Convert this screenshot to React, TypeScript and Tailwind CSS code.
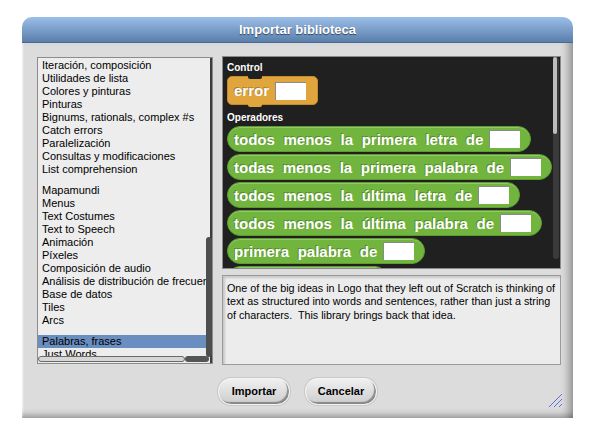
const groups = [
  [
    'Iteración, composición',
    'Utilidades de lista',
    'Colores y pinturas',
    'Pinturas',
    'Bignums, rationals, complex #s',
    'Catch errors',
    'Paralelización',
    'Consultas y modificaciones',
    'List comprehension',
  ],
  [
    'Mapamundi',
    'Menus',
    'Text Costumes',
    'Text to Speech',
    'Animación',
    'Píxeles',
    'Composición de audio',
    'Análisis de distribución de frecuencia',
    'Base de datos',
    'Tiles',
    'Arcs',
  ],
  ['Palabras, frases', 'Just Words', 'History / Multiline text'],
]

const reporters = [
  'todos menos la primera letra de',
  'todas menos la primera palabra de',
  'todos menos la última letra de',
  'todos menos la última palabra de',
  'primera palabra de',
]

const description = [
  'One of the big ideas in Logo that they left out of Scratch is thinking of',
  'text as structured into words and sentences, rather than just a string',
  'of characters.  This library brings back that idea.',
]

const blockText =
  'font-bold text-white text-[15px] leading-none [word-spacing:4.5px] [text-shadow:-1px_-1px_0_rgba(0,0,0,0.25)] whitespace-nowrap'

const pill =
  'h-[26px] rounded-full border border-[#5e9c30] bg-[#72b53e] shadow-[inset_0_1px_0_rgba(255,255,255,0.25)]'

function Slot() {
  return (
    <span className="inline-block h-[18px] w-[31px] flex-shrink-0 border-t border-l border-[#8a8a8a] bg-white" />
  )
}

function Reporter({ text }: { text: string }) {
  return (
    <div className={pill + ' flex w-max items-center gap-[6px] pl-[6px] pr-[10px]'}>
      <span className={blockText}>{text}</span>
      <Slot />
    </div>
  )
}

function ErrorBlock() {
  return (
    <div className="relative flex h-[29px] w-[91px] items-center gap-[6px] rounded-[5px] border border-[#c48c2c] bg-[#e0a53d] pl-[6px]">
      <span className={blockText}>error</span>
      <Slot />
      {/* notch on top, tab below */}
      <span className="absolute -top-px left-[20px] h-[3px] w-[14px] rounded-b-[2px] bg-[#202020]" />
      <span className="absolute -bottom-[3px] left-[20px] h-[3px] w-[14px] rounded-b-[2px] bg-[#e0a53d]" />
    </div>
  )
}

export default function App() {
  return (
    <div className="h-[443px] w-[600px] bg-white pl-[22px] pt-[17px] font-['Liberation_Sans',Arial,sans-serif]">
      <div className="flex h-[401px] w-[551px] flex-col overflow-hidden rounded-t-[10px]">
        <div className="flex h-[26px] flex-shrink-0 items-center justify-center border-b border-[#4a6a94] bg-gradient-to-b from-[#9cbfe9] to-[#5b7fab]">
          <span className="text-[13px] font-bold text-white [text-shadow:0_1px_1px_rgba(0,0,0,0.55)]">
            Importar biblioteca
          </span>
        </div>

        <div className="relative flex flex-1 flex-col bg-[#dcdcdc] pl-[15px] pt-[13px] shadow-[inset_-10px_0_8px_-6px_rgba(0,0,0,0.35),inset_0_-8px_6px_-5px_rgba(0,0,0,0.3),inset_2px_0_2px_-1px_rgba(255,255,255,0.8)]">
          <div className="flex gap-[9px]">
            {/* library list */}
            <div className="relative mt-[1px] h-[307px] w-[176px] overflow-hidden border border-[#8c8c8c] bg-[#ededed]">
              <div className="pt-[1px] text-[11px] leading-[13px] text-black">
                {groups.map((g, gi) => (
                  <div key={gi} className={gi > 0 ? 'mt-[8px]' : ''}>
                    {g.map((name) => (
                      <div
                        key={name}
                        className={
                          'whitespace-nowrap pl-[4px] ' +
                          (name === 'Palabras, frases' ? 'bg-[#6a8ec0]' : '')
                        }
                      >
                        {name}
                      </div>
                    ))}
                  </div>
                ))}
              </div>
              <div className="absolute right-0 top-0 h-full w-[2px] bg-[#3c3c3c]" />
              <div className="absolute right-0 top-[179px] h-[120px] w-[6px] rounded-[3px] bg-[#4e4e4e]" />
              <div className="absolute bottom-[1px] left-0 flex h-[6px] w-[171px]">
                <div className="h-full w-[147px] rounded-[3px] border border-[#6a6a6a] bg-[#d6d6d6]" />
                <div className="h-full flex-1 rounded-[3px] bg-[#555]" />
              </div>
            </div>

            <div className="flex w-[339px] flex-col gap-[6px]">
              {/* palette preview */}
              <div className="relative h-[213px] overflow-hidden border border-[#8a8a8a] bg-[#202020] pl-[4px] pt-[5px]">
                <div className="text-[10px] font-bold leading-[12px] text-white">Control</div>
                <div className="mt-[2px]">
                  <ErrorBlock />
                </div>
                <div className="mt-[7px] text-[10px] font-bold leading-[12px] text-white">Operadores</div>
                <div className="mt-[2px] flex flex-col gap-[2px]">
                  {reporters.map((r) => (
                    <Reporter key={r} text={r} />
                  ))}
                  {/* next block, only its top edge is in view */}
                  <div className={pill + ' w-[161px] flex-shrink-0'} />
                </div>
                <div className="absolute right-[1px] top-0 h-[202px] w-[6px] rounded-[3px] bg-[#3a3a3a]">
                  <div className="h-[77px] w-[4px] rounded-[2px] bg-[#bdbdbd]" />
                </div>
              </div>

              {/* description */}
              <div className="h-[90px] overflow-hidden border border-[#9a9a9a] bg-[#ececec] pl-[4px] pt-[6px] text-[10.75px] leading-[13.4px] text-black shadow-[inset_2px_2px_2px_rgba(0,0,0,0.15)]">
                {description.map((line) => (
                  <div key={line} className="whitespace-pre">
                    {line}
                  </div>
                ))}
              </div>
            </div>
          </div>

          {/* buttons */}
          <div className="mt-[13px] flex justify-center gap-[15px] pr-[15px]">
            {['Importar', 'Cancelar'].map((b) => (
              <button
                key={b}
                className="h-[27px] w-[72px] rounded-[13px] border border-[#f4f4f4] bg-gradient-to-b from-[#f0f0f0] to-[#cdcdcd] text-[11px] font-bold text-black shadow-[inset_-2px_-2px_1px_rgba(0,0,0,0.35),0_0_0_1px_#c8c8c8]"
              >
                {b}
              </button>
            ))}
          </div>

          {/* resize handle */}
          <svg
            className="absolute bottom-[10px] right-[10px]"
            width="15"
            height="15"
            viewBox="0 0 15 15"
          >
            <path d="M1 14 L14 1 M6 14 L14 6 M11 14 L14 11" stroke="#5a6fd8" strokeWidth="1" />
          </svg>
        </div>
      </div>
    </div>
  )
}
